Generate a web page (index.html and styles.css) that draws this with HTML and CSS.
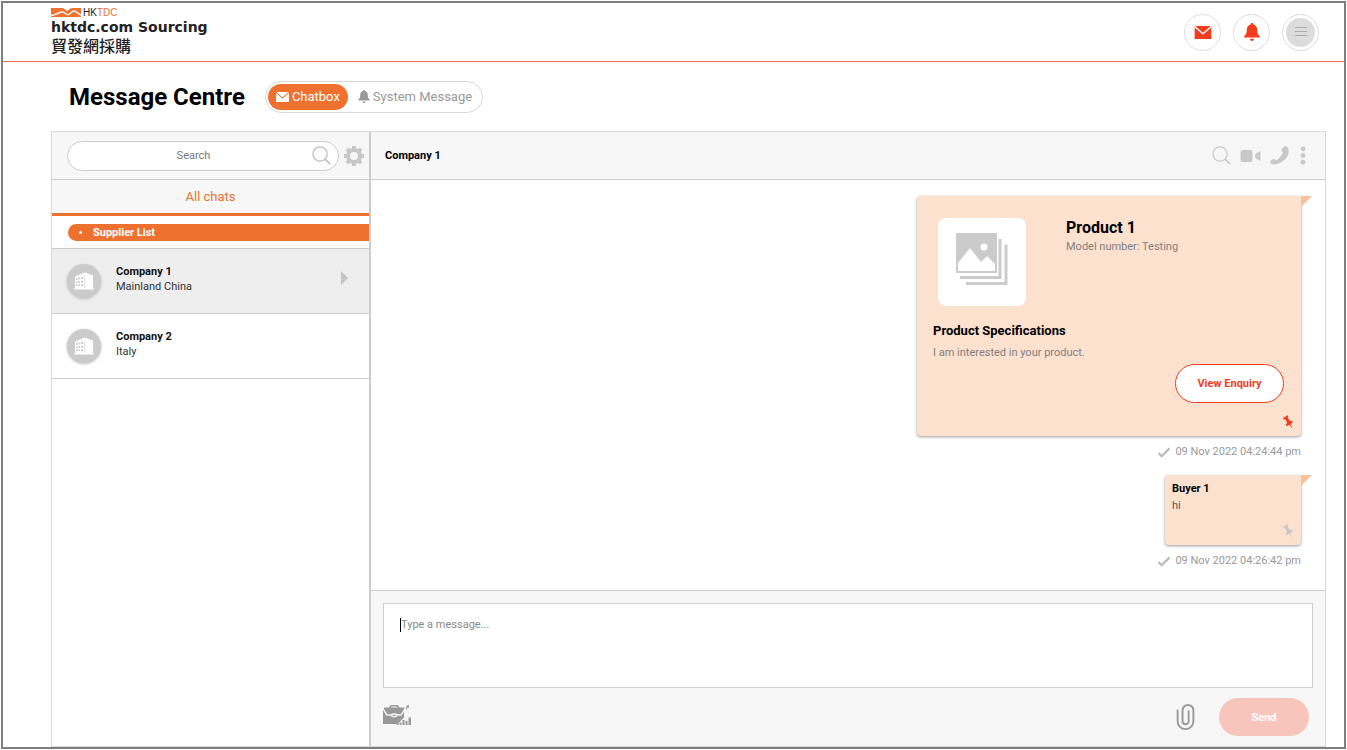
FILE: index.html
```html
<!DOCTYPE html>
<html lang="en">
<head>
<meta charset="utf-8">
<title>Message Centre</title>
<link rel="stylesheet" href="styles.css">
</head>
<body>
<svg class="defs" aria-hidden="true">
  <symbol id="mail" viewBox="0 0 18 14"><path fill="currentColor" d="M0 0h18v14H0z"/><path d="M0 .5 9 8.500 18 .5" fill="none" stroke="var(--fold)" stroke-width="1.500"/></symbol>
  <symbol id="bell" viewBox="0 0 16 18"><path fill="currentColor" d="M8 0c.9 0 1.400.6 1.400 1.400C12 2 13.200 4.200 13.200 6.500c0 4 .8 5.200 2.600 6.500v1.500H.2V13c1.800-1.300 2.600-2.500 2.600-6.500C2.800 4.200 4 2 6.600 1.400 6.600.6 7.100 0 8 0zM6 15.800h4C9.800 17.200 9 18 8 18s-1.800-.8-2-2.200z"/></symbol>
  <symbol id="lens" viewBox="0 0 20 20"><circle cx="8.500" cy="8.500" r="7.500" fill="none" stroke="currentColor" stroke-width="1.300"/><path d="m13.800 13.800 5.200 5.200" stroke="currentColor" stroke-width="1.600"/></symbol>
  <symbol id="building" viewBox="0 0 34 34"><path fill="#fff" d="M8 12.500 18 8.500v17H7v-1h1zM18 8.500 26 11.500v13h1v1h-9z"/><path fill="#cbcbcb" d="M9 14h1.500v2H9zM11.500 13.500H13v2h-1.500zM14 13h2v2h-2zM9 17.200h1.500v2H9zM11.500 17H13v2h-1.500zM14 16.700h2v2h-2zM9 20.300h1.500v2H9zM11.500 20.300H13v2h-1.500zM14 20.300h2v2h-2zM17.500 12h.7v12h-.7z"/></symbol>
  <symbol id="pin" viewBox="0 0 12 16"><path fill="currentColor" d="M0 3.200 4.900.2l1 1.300-.8 1 2.300 3.900 2.600-.4.900 1.800-2.800 1.700 2.300 5.300-3.600-4.400-3.100 1.800-.8-1.800 1.700-2.100L2.300 4.500.8 4.700z"/></symbol>
  <symbol id="check" viewBox="0 0 14 12"><path d="M1 6.500 4.500 10 13 1.500" fill="none" stroke="currentColor" stroke-width="2.400"/></symbol>
</svg>

<div class="page">
  <header class="topbar">
    <a class="brand" href="#">
      <span class="brand-row">
        <svg class="brand-mark" viewBox="0 0 30 9"><path fill="#ee7130" d="M0 0h11c2 0 3 1.800 5 3.200C18 1.800 19 0 22 0h8v9H0z"/><path d="M0 7.500C5 7.500 8 4 11 4s4 2.700 6 2.700S20.500 3 23 3s4 3.500 7 4" fill="none" stroke="#fff" stroke-width="1.300"/></svg>
        <span class="brand-org">HK<em>TDC</em></span>
      </span>
      <span class="brand-name">hktdc.com Sourcing</span>
      <span class="brand-zh" lang="zh-Hant">貿發網採購</span>
    </a>
    <nav class="top-actions">
      <button class="round" aria-label="Messages"><svg class="i-mail"><use href="#mail"/></svg></button>
      <button class="round" aria-label="Notifications"><svg class="i-bell"><use href="#bell"/></svg></button>
      <button class="round" aria-label="Menu"><span class="menu-disc"><svg class="i-menu" viewBox="0 0 12 12"><path d="M0 1.500h12M0 5.500h12M0 9.500h12" stroke="#aaa" stroke-width="1"/></svg></span></button>
    </nav>
  </header>

  <main class="main">
    <div class="heading">
      <h1>Message Centre</h1>
      <div class="switch">
        <button class="tab tab-on"><svg class="i-mail-s"><use href="#mail"/></svg>Chatbox</button>
        <button class="tab"><svg class="i-bell-s"><use href="#bell"/></svg>System Message</button>
      </div>
    </div>

    <div class="panel">
      <aside class="side">
        <div class="side-search">
          <label class="search">
            <input type="text" placeholder="Search" aria-label="Search">
            <svg class="i-lens"><use href="#lens"/></svg>
          </label>
          <button class="icon-btn" aria-label="Settings"><svg class="i-gear" viewBox="-10 -10 20 20"><circle r="6" fill="none" stroke="currentColor" stroke-width="4"/><g fill="currentColor"><path id="tooth" d="M-2-10h4v4h-4z"/><use href="#tooth" transform="rotate(45)"/><use href="#tooth" transform="rotate(90)"/><use href="#tooth" transform="rotate(135)"/><use href="#tooth" transform="rotate(180)"/><use href="#tooth" transform="rotate(225)"/><use href="#tooth" transform="rotate(270)"/><use href="#tooth" transform="rotate(315)"/></g></svg></button>
        </div>
        <button class="all-chats">All chats</button>
        <div class="group"><h2>Supplier List</h2></div>
        <a class="contact contact-on" href="#">
          <span class="avatar"><svg><use href="#building"/></svg></span>
          <span class="who"><strong>Company 1</strong><span>Mainland China</span></span>
          <svg class="i-arrow" viewBox="0 0 7 14"><path fill="#c4c4c4" d="m0 0 7 7-7 7z"/></svg>
        </a>
        <a class="contact" href="#">
          <span class="avatar"><svg><use href="#building"/></svg></span>
          <span class="who"><strong>Company 2</strong><span>Italy</span></span>
        </a>
      </aside>

      <section class="chat">
        <div class="chat-head">
          <h2>Company 1</h2>
          <div class="tools">
            <button class="icon-btn" aria-label="Search chat"><svg class="i-lens"><use href="#lens"/></svg></button>
            <button class="icon-btn" aria-label="Video call"><svg class="i-video" viewBox="0 0 20 12"><rect width="12" height="12" rx="2.500" fill="currentColor"/><path fill="currentColor" d="M20 1v10l-4-2q-1.500-.6-1.500-3t1.500-3z"/></svg></button>
            <button class="icon-btn" aria-label="Call"><svg class="i-phone" viewBox="0 0 18 18"><path fill="currentColor" d="M13.500.6c.8-.8 1.800-.6 2.400.1 3.200 3.400 2 8.300-1.600 11.900S5.300 18.400 1.500 17C.4 16.600-.1 15.500.5 14.600l1-1.500c.6-.9 1.700-1.100 2.600-.6l1.900 1c2.200-1 5.500-4.400 6.200-7l-1.100-1.900c-.5-.9-.4-1.800.2-2.300z"/></svg></button>
            <button class="icon-btn" aria-label="More"><svg class="i-dots" viewBox="0 0 6 20"><g fill="currentColor"><circle cx="3" cy="3" r="2.500"/><circle cx="3" cy="10" r="2.500"/><circle cx="3" cy="17" r="2.500"/></g></svg></button>
          </div>
        </div>

        <div class="thread">
          <article class="bubble enquiry">
            <div class="product">
              <div class="thumb"><svg viewBox="0 0 52 52"><g fill="none" stroke="#cbcbcb" stroke-width="3"><path d="M44 6v38.500H4M50 11.500v39H10"/></g><path fill="#cbcbcb" d="M0 0h41v40H0z"/><circle cx="28" cy="14" r="3.500" fill="#fff"/><path fill="#fff" d="M2 38v-8l12-15 11 14 6-6 8 8v7z"/></svg></div>
              <div class="product-info"><h3>Product 1</h3><p>Model number: Testing</p></div>
            </div>
            <h4>Product Specifications</h4>
            <p class="note">I am interested in your product.</p>
            <button class="view">View Enquiry</button>
            <svg class="i-pin pin-on"><use href="#pin"/></svg>
          </article>
          <p class="stamp"><svg class="i-check"><use href="#check"/></svg>09 Nov 2022 04:24:44 pm</p>
          <article class="bubble reply">
            <h5>Buyer 1</h5>
            <p>hi</p>
            <svg class="i-pin"><use href="#pin"/></svg>
          </article>
          <p class="stamp"><svg class="i-check"><use href="#check"/></svg>09 Nov 2022 04:26:42 pm</p>
        </div>

        <form class="composer">
          <div class="field"><textarea placeholder="Type a message..." aria-label="Message"></textarea><span class="caret"></span></div>
          <div class="composer-row">
            <button type="button" class="icon-btn" aria-label="Business tools"><svg class="i-case" viewBox="0 0 28 20"><path fill="#999" d="M6.500 2.500C6.500.8 7.200 0 8.700 0h5.100c1.500 0 2.200.8 2.200 2.500h5V4l-3.200 5.200h-3.600c-1-1.400-5.200-1.400-6.200 0H4.300L1 4V2.500zM8.300 2.500h6V1.600h-6zM0 4.800l3.300 6h4.500c.6 2.300 6 2.300 6.600 0h4l2.600-4v5.700L15.500 18v1H0z"/><path fill="#999" d="M9.200 10.300q2-1.300 4 0-2 1.700-4 0zM19.500 15h2v5h-2zM22.500 16h2v4h-2zM25.500 12.500H28V20h-2.500zM16.500 17.500h2V20h-2zM13.500 19h2v1h-2zM22.800 1l3.400-1-.7 3.400-.8-.8-1.500 1.800-.9-.8 1.500-1.700z"/></svg></button>
            <span class="composer-end">
              <button type="button" class="icon-btn" aria-label="Attach"><svg class="i-clip" viewBox="0 0 20 28"><path d="M1.700 7v11.500a8.300 8.300 0 0 0 16.600 0V7a5.700 5.700 0 0 0-11.400 0v11.500a3.200 3.200 0 0 0 6.400 0V8" fill="none" stroke="#999" stroke-width="2" stroke-linecap="round"/></svg></button>
              <button type="button" class="send">Send</button>
            </span>
          </div>
        </form>
      </section>
    </div>
  </main>
</div>
</body>
</html>
```
FILE: styles.css
```css
* { box-sizing: border-box; }
html, body { height: 100%; }
body { margin: 0; padding: 1px; font-family: Roboto, "Noto Sans CJK TC", sans-serif; font-size: 11px; color: #333; background: #fff; }
h1, h2, h3, h4, h5, p { margin: 0; color: #000; }
button { font: inherit; border: 0; padding: 0; background: none; cursor: pointer; }
a { color: inherit; text-decoration: none; }
svg { display: block; flex: none; }
.defs { position: absolute; width: 0; height: 0; }

.page { display: flex; flex-direction: column; min-height: 100%; border: 2px solid #7d7f7d; }
.topbar { display: flex; justify-content: space-between; align-items: center; height: 59px; padding: 0 25px 0 48px; border-bottom: 1px solid #f26b55; }
.brand { display: flex; flex-direction: column; padding-bottom: 4px; color: #222; }
.brand-row { display: flex; align-items: center; gap: 2px; height: 10px; }
.brand-mark { width: 30px; height: 9px; }
.brand-org { font: 10px/10px "Liberation Sans", sans-serif; }
.brand-org em { font-style: normal; color: #ee7130; }
.brand-name { font: bold 14px/19px "DejaVu Sans", sans-serif; }
.brand-zh { font: 500 16px/16px "Noto Sans CJK TC", sans-serif; }
.top-actions { display: flex; gap: 12px; }
.round { display: grid; place-items: center; width: 37px; height: 37px; border: 1px solid #ddd; border-radius: 50%; color: #f43c1c; }
.i-mail { width: 18px; height: 13px; --fold: #fff; }
.i-bell { width: 16px; height: 18px; }
.menu-disc { display: grid; place-items: center; width: 29px; height: 29px; border-radius: 50%; background: #dcdcdc; }
.i-menu { width: 12px; height: 12px; }

.main { flex: 1; display: flex; flex-direction: column; padding: 0 18px 0 48px; }
.heading { display: flex; align-items: center; gap: 20px; height: 69px; padding-left: 18px; }
h1 { font-size: 24px; line-height: 32px; }
.switch { display: flex; height: 32px; padding: 2px; border: 1px solid #d8d8d8; border-radius: 16px; }
.tab { display: flex; align-items: center; gap: 3px; padding: 0 8px 0 10px; border-radius: 14px; font-size: 13px; color: #999; }
.tab-on { padding: 0 8px; background: #ee7130; color: #fff; }
.i-mail-s { width: 13px; height: 10px; --fold: #ee7130; }
.i-bell-s { width: 12px; height: 13px; }

.panel { flex: 1; display: flex; border: 1px solid #d8d8d8; }
.side { width: 319px; border-right: 2px solid #ccc; }
.side-search { display: flex; align-items: center; gap: 5px; height: 48px; padding: 0 5px 0 15px; border-bottom: 1px solid #ccc; background: #f7f7f7; }
.search { flex: 1; display: flex; align-items: center; height: 30px; padding: 0 7px; border: 1px solid #ccc; border-radius: 15px; background: #fff; color: #bbb; }
.search input { flex: 1; min-width: 0; border: 0; outline: 0; padding: 0; background: none; text-align: center; font: 11px/16px Roboto, sans-serif; }
.search input::placeholder { color: #777; }
.i-lens { width: 19px; height: 19px; }
.icon-btn { color: #c8c8c8; }
.i-gear { width: 20px; height: 20px; }
.all-chats { display: block; width: 100%; height: 36px; border-bottom: 3px solid #ee7130; background: #f7f7f7; color: #ee7130; font-size: 13px; }
.group { padding: 8px 0 7px 16px; }
.group h2 { display: flex; align-items: center; gap: 11px; height: 17px; padding-left: 11px; border-radius: 9px 0 0 9px; background: #ee7130; color: #fff; font-size: 11px; }
.group h2::before { content: ""; width: 3px; height: 3px; border-radius: 50%; background: #fff; }
.contact { display: flex; align-items: center; height: 65px; padding: 0 21px 0 15px; border-bottom: 1px solid #ccc; }
.contact-on { height: 66px; border-top: 1px solid #ccc; background: #eee; }
.avatar { width: 34px; height: 34px; border-radius: 50%; background: #cbcbcb; box-shadow: 0 1px 3px #bbb; }
.avatar svg { width: 34px; height: 34px; }
.who { flex: 1; display: flex; flex-direction: column; padding: 0 0 5px 15px; line-height: 15px; }
.who strong { color: #111; }
.i-arrow { width: 7px; height: 14px; margin-bottom: 6px; }

.chat { flex: 1; display: flex; flex-direction: column; min-width: 0; }
.chat-head { display: flex; align-items: center; justify-content: space-between; height: 48px; padding: 0 19px 0 14px; border-bottom: 1px solid #ccc; background: #f7f7f7; }
.chat-head h2 { font-size: 11px; }
.tools { display: flex; align-items: center; gap: 9px; }
.i-video { width: 21px; height: 12px; }
.i-phone { width: 19px; height: 19px; }
.i-dots { width: 6px; height: 19px; margin-left: 2px; }
.thread { flex: 1; display: flex; flex-direction: column; align-items: flex-end; padding: 16px 24px 0; }
.bubble { position: relative; display: flex; flex-direction: column; border-radius: 4px 0 4px 4px; background: #fce1cf; box-shadow: 0 1px 3px #999; }
.bubble::after { content: ""; position: absolute; top: 0; left: 100%; width: 11px; height: 11px; background: #f9c09c; clip-path: polygon(0 0, 100% 0, 0 100%); }
.enquiry { width: 384px; min-height: 240px; padding: 22px 17px 5px 16px; }
.product { display: flex; gap: 40px; padding-left: 5px; }
.thumb { display: grid; place-items: center; width: 88px; height: 88px; padding-bottom: 6px; border-radius: 8px; background: #fff; }
.thumb svg { width: 52px; height: 52px; }
.product-info p, .note { color: #808080; line-height: 18px; }
h3 { font-size: 16px; line-height: 20px; }
h4 { margin-top: 16px; font-size: 13px; line-height: 18px; }
.note { margin-top: 4px; }
.view { align-self: flex-end; width: 109px; height: 39px; margin-top: 2px; border: 1px solid #f43c1c; border-radius: 20px; background: #fff; color: #f43c1c; font-weight: bold; }
.i-pin { position: absolute; right: 7px; bottom: 6px; width: 11px; height: 15px; color: #c8c8c8; }
.pin-on { color: #f43c1c; }
.stamp { display: flex; align-items: center; gap: 4px; margin: 8px 0 15px; line-height: 16px; color: #999; }
.i-check { width: 14px; height: 11px; color: #bbb; }
.reply { width: 136px; min-height: 70px; padding: 6px 7px; }
.reply p { margin-top: 1px; color: #555; line-height: 16px; }
h5 { font-size: 11px; line-height: 16px; }

.composer { padding: 12px 12px 10px; border-top: 1px solid #ccc; background: #f7f7f7; }
.field { position: relative; }
.field textarea { display: block; width: 100%; height: 85px; padding: 13px 17px; border: 1px solid #d0d0d0; outline: 0; resize: none; background: #fff; font: 11px/16px Roboto, sans-serif; }
.field textarea::placeholder { color: #888; }
.caret { position: absolute; left: 17px; top: 15px; width: 1px; height: 14px; background: #000; }
.composer-row { display: flex; justify-content: space-between; align-items: center; padding: 10px 4px 0 0; }
.composer-end { display: flex; align-items: center; gap: 24px; }
.i-case { width: 28px; height: 20px; margin-bottom: 4px; }
.i-clip { width: 19px; height: 28px; }
.send { width: 90px; height: 38px; border-radius: 19px; background: #f8c5bc; color: #fff; font-weight: bold; }
```
